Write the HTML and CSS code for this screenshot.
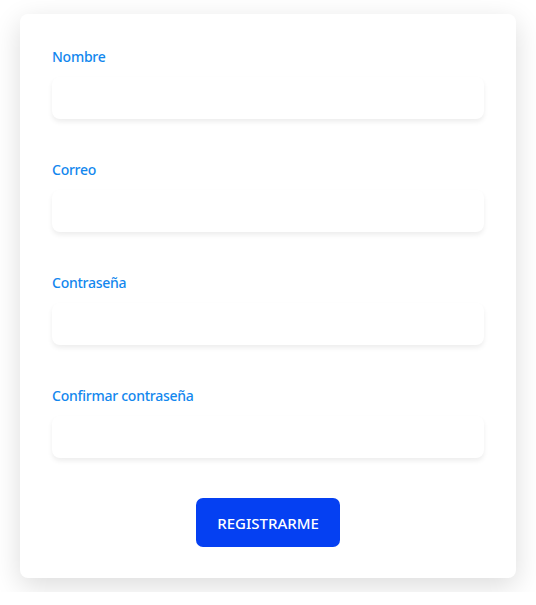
FILE: index.html
```html
<!DOCTYPE html>
<html lang="es">
<head>
<meta charset="utf-8">
<link rel="stylesheet" href="styles.css">
</head>
<body>
<form class="card">
  <div class="field">
    <label class="label">Nombre</label>
    <input class="input" type="text">
  </div>
  <div class="field">
    <label class="label">Correo</label>
    <input class="input" type="email">
  </div>
  <div class="field">
    <label class="label">Contraseña</label>
    <input class="input" type="password">
  </div>
  <div class="field">
    <label class="label">Confirmar contraseña</label>
    <input class="input" type="password">
  </div>
  <div class="actions">
    <button class="btn" type="button">REGISTRARME</button>
  </div>
</form>
</body>
</html>
```
FILE: styles.css
```css
html, body {
  margin: 0;
  background: #ffffff;
}
body {
  padding: 14px 20px;
  font-family: "Noto Sans", "Open Sans", sans-serif;
}
.card {
  width: 496px;
  box-sizing: border-box;
  padding: 32px 32px 31px;
  background: #ffffff;
  border-radius: 8px;
  box-shadow: 0 8px 28px rgba(0, 0, 0, 0.14);
  display: flex;
  flex-direction: column;
  gap: 40px;
}
.field {
  display: flex;
  flex-direction: column;
  gap: 9px;
}
.label {
  font-size: 14px;
  line-height: 22px;
  font-weight: 500;
  letter-spacing: -0.25px;
  color: #1287ee;
}
.input {
  height: 42px;
  box-sizing: border-box;
  border: none;
  border-radius: 8px;
  background: #ffffff;
  box-shadow: 0 3px 5px rgba(0, 0, 0, 0.07);
  outline: none;
}
.actions {
  display: flex;
  justify-content: center;
}
.btn {
  width: 144px;
  height: 49px;
  border: none;
  border-radius: 7px;
  background: #0540f2;
  color: #ffffff;
  font-family: "Noto Sans", "Open Sans", sans-serif;
  font-size: 15px;
  font-weight: 500;
  cursor: pointer;
}
```
